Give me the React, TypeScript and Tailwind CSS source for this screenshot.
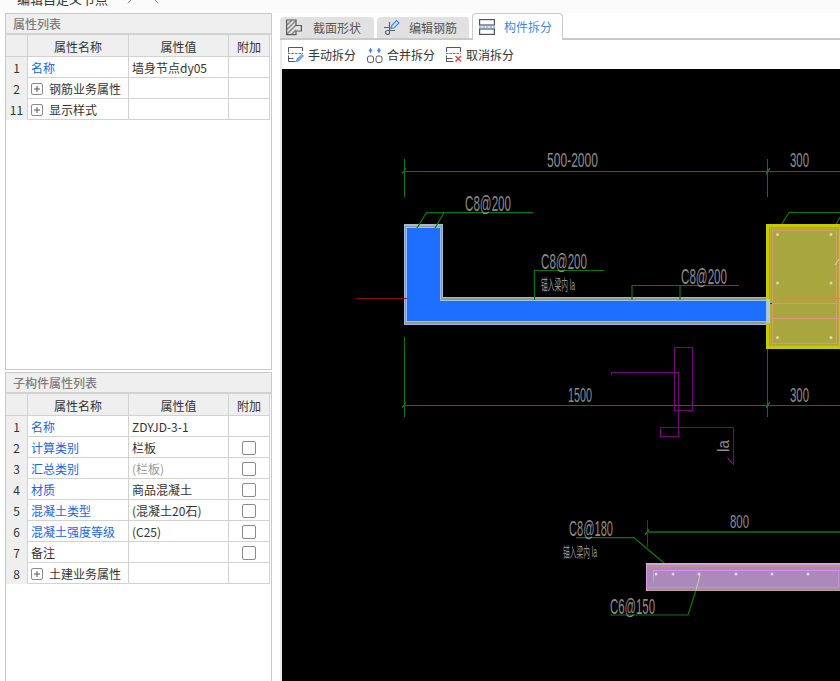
import { ChevronLeft, ChevronRight } from 'lucide-react';

interface Row {
  no: string;
  name: string;
  value?: string;
  blue?: boolean;
  group?: boolean;
  check?: boolean;
  muted?: boolean;
}

const mainRows: Row[] = [
  { no: '1', name: '名称', value: '墙身节点dy05', blue: true },
  { no: '2', name: '钢筋业务属性', group: true },
  { no: '11', name: '显示样式', group: true },
];

const childRows: Row[] = [
  { no: '1', name: '名称', value: 'ZDYJD-3-1', blue: true },
  { no: '2', name: '计算类别', value: '栏板', blue: true, check: true },
  { no: '3', name: '汇总类别', value: '(栏板)', blue: true, check: true, muted: true },
  { no: '4', name: '材质', value: '商品混凝土', blue: true, check: true },
  { no: '5', name: '混凝土类型', value: '(混凝土20石)', blue: true, check: true },
  { no: '6', name: '混凝土强度等级', value: '(C25)', blue: true, check: true },
  { no: '7', name: '备注', check: true },
  { no: '8', name: '土建业务属性', group: true },
];

function PropertyTable({ rows }: { rows: Row[] }) {
  return (
    <div className="w-[264px] text-[12px] text-[#333]">
      <div className="grid h-[22px] grid-cols-[22px_101px_100px_41px] border-b border-[#d2d2d2] bg-[#efefef] leading-[23px] text-[#333]">
        <div className="border-r border-[#d2d2d2]" />
        <div className="border-r border-[#d2d2d2] text-center">属性名称</div>
        <div className="border-r border-[#d2d2d2] text-center">属性值</div>
        <div className="border-r border-[#d2d2d2] text-center">附加</div>
      </div>
      {rows.map((row) => (
        <div key={row.no} className="grid h-[21px] grid-cols-[22px_101px_100px_41px] border-b border-[#d2d2d2] leading-[21px]">
          <div className="border-r border-[#d2d2d2] bg-[#efefef] text-center">{row.no}</div>
          <div className={`flex items-center border-r border-[#d2d2d2] pl-[3px] ${row.blue ? 'text-[#2165dd]' : ''}`}>
            {row.group && (
              <span className="mr-[6px] flex h-[12px] w-[12px] items-center justify-center rounded-[2px] border border-[#8a8a8a]">
                <svg width="8" height="8" viewBox="0 0 8 8">
                  <path d="M1 4h6M4 1v6" stroke="#555" strokeWidth="1" fill="none" />
                </svg>
              </span>
            )}
            {row.name}
          </div>
          <div className={`border-r border-[#d2d2d2] pl-[3px] ${row.muted ? 'text-[#999]' : ''}`}>{row.value}</div>
          <div className="flex items-center justify-center border-r border-[#d2d2d2]">
            {row.check && <span className="h-[14px] w-[14px] rounded-[2px] border border-[#8a8a8a] bg-white" />}
          </div>
        </div>
      ))}
    </div>
  );
}

function Panel({ title, rows, className }: { title: string; rows: Row[]; className: string }) {
  return (
    <div className={`flex flex-col border border-[#c9c9c9] bg-white ${className}`}>
      <div className="h-[21px] border-b-2 border-[#d2d2d2] bg-[#efefef] pl-[7px] text-[12px] leading-[19px] font-medium text-[#7d7d7d]">
        {title}
      </div>
      <PropertyTable rows={rows} />
    </div>
  );
}

function SectionIcon() {
  return (
    <svg width="16" height="17" viewBox="0 0 16 17" fill="none" className="shrink-0">
      <path d="M1 10.500l9-9M1 6l5-5M1 15l9-9M5.500 15.500l4.500-4.500" stroke="#8a8a8a" strokeWidth="1.500" />
      <path d="M.6 1h9.400v5.500h5.400v5.500H10v3.600H.6z" stroke="#5c5c5c" strokeWidth="1.200" />
    </svg>
  );
}

function RebarIcon() {
  return (
    <svg width="17" height="17" viewBox="0 0 17 17" fill="none" className="shrink-0">
      <path d="M6.500 3v10.500a2 2 0 1 1-2-2H12M1 8.500h5.500" stroke="#5c6270" strokeWidth="1.200" />
      <path d="M8 9.500l.8-3L13.500 1.500l2.500 2.500-4.800 4.800z" stroke="#3d86e0" strokeWidth="1.200" />
    </svg>
  );
}

function SplitIcon() {
  return (
    <svg width="16" height="16" viewBox="0 0 16 16" fill="none" className="shrink-0">
      <rect x=".6" y=".6" width="14.800" height="5.400" stroke="#4a5568" strokeWidth="1.200" />
      <rect x=".6" y="10" width="14.800" height="5.400" stroke="#4a5568" strokeWidth="1.200" />
      <path d="M0 8h16" stroke="#3d86e0" strokeWidth="1" strokeDasharray="2.500 1" />
    </svg>
  );
}

function ManualIcon() {
  return (
    <svg width="16" height="15" viewBox="0 0 16 15" fill="none" className="shrink-0">
      <path d="M.5 5.500V.5h14V4M.5 8.500v6h7M.5 11.500h5" stroke="#556" strokeWidth="1" />
      <path d="M0 6.500h15" stroke="#3d86e0" strokeWidth="1" strokeDasharray="2.500 1" />
      <path d="M8.500 14.500l.5-2.500 5-4.500 1.500 1.500-5 5z" fill="#7db2ec" stroke="#3d86e0" strokeWidth=".8" />
    </svg>
  );
}

function MergeIcon() {
  return (
    <svg width="16" height="16" viewBox="0 0 16 16" fill="none" className="shrink-0">
      <rect x=".5" y="9" width="6" height="6.500" rx="2" stroke="#556" strokeWidth="1" />
      <rect x="9" y="9" width="6" height="6.500" rx="2" stroke="#556" strokeWidth="1" />
      <path d="M3.500 1v5M12 1v5" stroke="#3d86e0" strokeWidth="1" />
      <path d="M1.500 3.500l2-2 2 2-2 2zM10 3.500l2-2 2 2-2 2z" fill="#3d86e0" />
    </svg>
  );
}

function CancelIcon() {
  return (
    <svg width="16" height="15" viewBox="0 0 16 15" fill="none" className="shrink-0">
      <path d="M.5 5V.5h14V5M.5 8.500v6h7M.5 11.500h6" stroke="#556" strokeWidth="1" />
      <path d="M0 6.500h15" stroke="#3d86e0" strokeWidth="1" strokeDasharray="2.500 1" />
      <path d="M9.500 9l5.500 5.500M15 9l-5.500 5.500" stroke="#e33" strokeWidth="1.300" />
    </svg>
  );
}

function CadText({ x, y, w, size = 22, children }: { x: number; y: number; w: number; size?: number; children: string }) {
  return (
    <text x={x} y={y} textLength={w} lengthAdjust="spacingAndGlyphs" fontSize={size} fill="#8c8c8c">
      {children}
    </text>
  );
}

function DimTick({ x, y }: { x: number; y: number }) {
  return <path d={`M${x - 2} ${y + 3}L${x + 2} ${y - 3}`} stroke="#0b7a0b" strokeWidth="1" />;
}

function Drawing() {
  const green = '#0b7a0b';
  const purple = '#74087a';
  return (
    <svg
      viewBox="282 69 558 612"
      className="h-[612px] w-[558px] font-['Liberation_Sans','Noto_Sans_CJK_SC',sans-serif]"
      shapeRendering="crispEdges"
    >
      <rect x="282" y="69" width="558" height="612" fill="#000" />

      {/* dimensions */}
      <path d="M404.500 171.500H840M404.500 159V197M767.500 159V197M404.500 337V417M767.500 337V417M404.500 405.500H840" stroke={green} />
      <DimTick x={404} y={171} />
      <DimTick x={768} y={171} />
      <DimTick x={404} y={405} />
      <DimTick x={768} y={405} />
      <CadText x={547} y={167} w={51} size={20}>500-2000</CadText>
      <CadText x={790} y={167} w={19} size={20}>300</CadText>
      <CadText x={568} y={402} w={24} size={20}>1500</CadText>
      <CadText x={790} y={402} w={19} size={20}>300</CadText>

      {/* blue wall */}
      <path d="M403.500 224H443V297H770V324.500H403.500Z" fill="#a3b8d8" />
      <path d="M404.500 225.500H442V298H770V323.500H404.500Z" fill="#9a9a7e" />
      <path d="M406 227H441V299.500H770V322H406Z" fill="#9cc0f5" />
      <path d="M407 228H440V301H770V321H407Z" fill="#1e6fff" />
      <path d="M355 298.500H407" stroke="#8c0a0a" />

      {/* leaders */}
      <g shapeRendering="auto" fill="none" stroke={green} strokeWidth="1.200">
        <path d="M417 228L426.500 212.700H533M435 228L444 212.700" />
        <path d="M534.500 300V270.500H604" />
        <path d="M632 300V285.500H739M680 285.500V300" />
        <path d="M777 232L789 212.500H840M832 232L840 217" />
        <path d="M576 537.700H634L670 568" />
        <path d="M610 615H688L696 590" />
      </g>
      <CadText x={465} y={211} w={46}>C8@200</CadText>
      <CadText x={541} y={269} w={46}>C8@200</CadText>
      <CadText x={681} y={284} w={46}>C8@200</CadText>
      <text x={541} y={290} fontSize="15" fill="#969696" textLength={34} lengthAdjust="spacingAndGlyphs">锚入梁内 la</text>

      {/* yellow column */}
      <rect x="767.500" y="225.500" width="73" height="121.500" fill="#a8a63e" stroke="#c8c800" strokeWidth="3" />
      <rect x="770" y="228" width="70" height="117" fill="none" stroke="#b4b22a" strokeWidth="1" />
      <rect x="772.500" y="230.500" width="64" height="113" fill="none" stroke="#d2a06a" strokeWidth="1" />
      <path d="M772 303.500H840M772 318.500H840" stroke="#d89a7a" />
      <path d="M779 298.500H840" stroke="#c89030" />
      <path d="M766 303.500H772" stroke="#8c0a5a" />
      <path d="M766 299H770V323H766Z" fill="#a9c6f7" />
      <g fill="#dcdc9a" shapeRendering="auto">
        {[234.500, 283, 337.500].map((y) => (
          <g key={y}>
            <circle cx="777.500" cy={y} r="1.500" />
            <circle cx="831" cy={y} r="1.500" />
          </g>
        ))}
      </g>
      <path d="M835 265L839 259" stroke="#dcdc9a" shapeRendering="auto" />

      {/* purple detail */}
      <g fill="none" stroke={purple}>
        <rect x="674" y="347" width="18.500" height="63.500" />
        <path d="M611 375V372H678.500V436.500H660.500V427H733V464L727 457" />
      </g>
      <text x={729} y={452} fontSize="17" fill="#8c8c8c" transform="rotate(-90 729 452)" textLength={12} lengthAdjust="spacingAndGlyphs">
        la
      </text>

      {/* lower section */}
      <path d="M647 520V547" stroke="#0a5a0a" strokeWidth="1" />
      <path d="M647 532H840" stroke="#0a5a0a" strokeWidth="2" />
      <DimTick x={647} y={532} />
      <CadText x={730} y={528} w={19} size={19}>800</CadText>
      <CadText x={569} y={536} w={44}>C8@180</CadText>
      <text x={563} y={557} fontSize="14" fill="#969696" textLength={34} lengthAdjust="spacingAndGlyphs">锚入梁内 la</text>
      <rect x="646.500" y="564" width="194" height="26.500" fill="#a98ab8" stroke="#d9a0e8" strokeWidth="1.500" />
      <path d="M648 566.500H840M648 590H840" stroke="#b8a080" />
      <path d="M653 583V570.500H840" stroke="#d98ef0" fill="none" />
      <path d="M838.500 570V587H648" stroke="#c78edc" fill="none" />
      <g fill="#e6d0ee" shapeRendering="auto">
        {[656, 673, 699, 736, 772, 808].map((x) => (
          <circle key={x} cx={x} cy="574" r="1.500" />
        ))}
      </g>
      <path d="M696 590L700 575" stroke="#b8d8b8" shapeRendering="auto" />
      <CadText x={610} y={614} w={45}>C6@150</CadText>
    </svg>
  );
}

export default function App() {
  return (
    <div className="flex h-[681px] w-[840px] flex-col overflow-hidden bg-white font-['Noto_Sans_CJK_SC','Noto_Sans',sans-serif] text-[12px] text-[#333]">
      <div className="flex h-[13px] shrink-0 items-end overflow-hidden bg-[#fbfbfb] pl-[17px]">
        <div className="mb-[4px] flex h-[20px] shrink-0 items-center text-[13px] leading-[20px]">
          <span className="w-[93px]">编辑自定义节点</span>
          <ChevronRight className="ml-[12px] h-[16px] w-[16px] text-[#555]" strokeWidth={1} />
          <ChevronLeft className="ml-[10px] h-[16px] w-[16px] text-[#555]" strokeWidth={1} />
        </div>
      </div>

      <div className="flex min-h-0 flex-1">
        <div className="ml-[5px] flex w-[267px] shrink-0 flex-col gap-[2px]">
          <Panel title="属性列表" rows={mainRows} className="h-[357px]" />
          <Panel title="子构件属性列表" rows={childRows} className="flex-1 border-b-0" />
        </div>

        <div className="ml-[8px] flex min-w-0 flex-1 flex-col">
          <div className="flex h-[27px] items-end gap-[3px] border-b-2 border-[#c9c9c9]">
            <div className="flex h-[21px] w-[94px] items-center gap-[11px] rounded-t-[4px] bg-[#e1e1e1] pl-[6px] text-[#555]">
              <SectionIcon />
              <span>截面形状</span>
            </div>
            <div className="flex h-[21px] w-[92px] items-center gap-[9px] rounded-t-[4px] bg-[#e1e1e1] pl-[6px] text-[#555]">
              <RebarIcon />
              <span>编辑钢筋</span>
            </div>
            <div className="-mb-[2px] flex h-[27px] w-[91px] items-center gap-[9px] rounded-t-[4px] border border-b-0 border-[#c9c9c9] bg-white pl-[6px] text-[#3f86e0]">
              <SplitIcon />
              <span>构件拆分</span>
            </div>
          </div>

          <div className="flex min-h-0 flex-1 flex-col border-l-2 border-[#ececec]">
            <div className="flex h-[29px] shrink-0 items-center pl-[6px] text-[#333]">
              <ManualIcon />
              <span className="ml-[4px] w-[48px]">手动拆分</span>
              <span className="ml-[11px]"><MergeIcon /></span>
              <span className="ml-[4px] w-[48px]">合并拆分</span>
              <span className="ml-[11px]"><CancelIcon /></span>
              <span className="ml-[4px] w-[48px]">取消拆分</span>
            </div>
            <Drawing />
          </div>
        </div>
      </div>
    </div>
  );
}
